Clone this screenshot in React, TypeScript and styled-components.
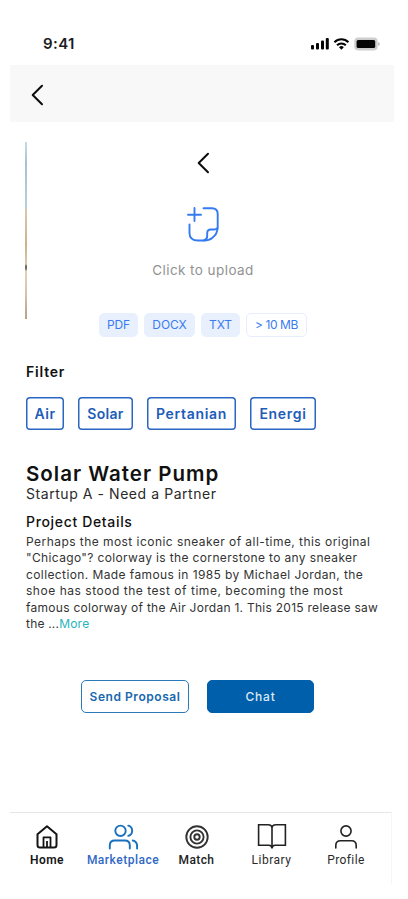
import React from "react";
import styled, { createGlobalStyle } from "styled-components";

const GlobalStyle = createGlobalStyle`
  * { box-sizing: border-box; }
  body { margin: 0; background: #fff; font-family: Inter, sans-serif; -webkit-font-smoothing: antialiased; }
  button { font: inherit; padding: 0; margin: 0; cursor: pointer; }
`;

const Screen = styled.main`
  width: 408px;
  height: 899px;
  padding-left: 10px;
  background: #fff;
  overflow: hidden;
  display: flex;
  flex-direction: column;
`;

const StatusBar = styled.div`
  height: 65px;
  flex: none;
  width: 384px;
  padding: 22px 14px 0 33px;
  display: flex;
  justify-content: space-between;
  align-items: center;
`;

const Clock = styled.span`
  font-size: 15px;
  font-weight: 600;
  letter-spacing: 0.4px;
  color: #1c1c1c;
  margin-bottom: 1px;
`;

const Header = styled.header`
  width: 384px;
  height: 57px;
  flex: none;
  background: #f8f8f8;
  padding: 3px 0 0 21px;
  display: flex;
  align-items: center;
`;

const IconButton = styled.button`
  border: 0;
  background: none;
  display: flex;
  color: #0c0c0c;
`;

const Upload = styled.section`
  height: 228px;
  flex: none;
  display: flex;
  padding: 20px 0 0 15px;
`;

const PhotoEdge = styled.div`
  width: 1.5px;
  margin-right: 0.5px;
  height: 177px;
  background: linear-gradient(
    #c3dce6 0%, #a4c3d2 12%, #b4cfdd 36%, #dfc6a9 39%, #cdb08b 58%, #dfc6a9 69%,
    #6f6c68 70%, #6f6c68 71.5%, #e3d0ba 73%, #dbc2a8 85%, #b79f88 100%
  );
`;

const DropZone = styled.div`
  width: 352px;
  display: flex;
  flex-direction: column;
  align-items: center;
  padding-top: 10px;
`;

const UploadIcon = styled.div`
  margin-top: 33px;
  height: 36px;
  display: flex;
`;

const Hint = styled.div`
  margin-top: 17px;
  height: 20px;
  line-height: 20px;
  font-size: 13.5px;
  letter-spacing: 0.43px;
  color: #929292;
`;

const FileTypes = styled.div`
  margin-top: 33px;
  display: flex;
  gap: 6px;
`;

const FileType = styled.span<{ $w: number; $outlined?: boolean }>`
  width: ${(p) => p.$w}px;
  height: 24px;
  border-radius: 5px;
  border: 1px solid ${(p) => (p.$outlined ? "#e6eefd" : "#e9f0fd")};
  background: ${(p) => (p.$outlined ? "#fff" : "#e9f0fd")};
  color: #397cf0;
  font-size: 12px;
  line-height: 22px;
  letter-spacing: ${(p) => (p.$outlined ? -0.4 : -0.1)}px;
  text-align: center;
  white-space: nowrap;
`;

const Text = styled.div<{ $size: number; $line: number; $weight?: number; $track?: number; $color?: string }>`
  font-size: ${(p) => p.$size}px;
  line-height: ${(p) => p.$line}px;
  height: ${(p) => p.$line}px;
  font-weight: ${(p) => p.$weight ?? 400};
  letter-spacing: ${(p) => p.$track ?? 0}px;
  color: ${(p) => p.$color ?? "#111"};
  white-space: nowrap;
`;

const Content = styled.section`
  height: 330px;
  flex: none;
  padding: 12px 0 0 16px;
`;

const Filters = styled.div`
  display: flex;
  gap: 14px;
  margin: 15px 0 32px;
`;

const Filter = styled.button<{ $w: number; $track: number }>`
  width: ${(p) => p.$w}px;
  height: 33px;
  border: 0;
  box-shadow: inset 0 0 0 1.5px #2a66c0;
  border-radius: 4px;
  background: #fff;
  color: #1e5cb8;
  font-size: 14px;
  font-weight: 600;
  letter-spacing: ${(p) => p.$track}px;
  white-space: nowrap;
`;

const Description = styled.div`
  margin-top: 3px;
`;

const ProjectHeading = styled.div`
  margin-top: 11px;
`;

const More = styled.span`
  color: #27b5bd;
`;

const Actions = styled.div`
  display: flex;
  gap: 18px;
  height: 132px;
  flex: none;
  padding-left: 71px;
`;

const Action = styled.button<{ $filled?: boolean }>`
  width: ${(p) => (p.$filled ? 107 : 108)}px;
  height: 33px;
  border-radius: 5px;
  border: 1px solid ${(p) => (p.$filled ? "#005faa" : "#2b7aba")};
  background: ${(p) => (p.$filled ? "#005faa" : "#fff")};
  color: ${(p) => (p.$filled ? "#dbe9f4" : "#1768ae")};
  font-size: 12px;
  font-weight: ${(p) => (p.$filled ? 500 : 600)};
  letter-spacing: ${(p) => (p.$filled ? 0.8 : 0.55)}px;
  white-space: nowrap;
`;

const TabBar = styled.nav`
  width: 382px;
  height: 72px;
  flex: none;
  border-top: 1px solid #e6e6e6;
  border-right: 1px solid #f5f5f5;
  display: grid;
  grid-template-columns: 74px 78px 69px 81px 68px;
`;

const Tab = styled.button<{ $color: string; $weight: number; $track: number }>`
  border: 0;
  background: none;
  color: ${(p) => p.$color};
  display: flex;
  flex-direction: column;
  align-items: center;
  font-family: Roboto, sans-serif;
  font-size: 12px;
  line-height: 14px;
  font-weight: ${(p) => p.$weight};
  letter-spacing: ${(p) => p.$track}px;
`;

const TabIcon = styled.span`
  height: 30px;
  margin: 9px 0 1px;
  display: flex;
  align-items: center;
`;

const Chevron = () => (
  <svg width="13" height="22" viewBox="0 0 13 22" fill="none" stroke="currentColor" strokeWidth="2" strokeLinecap="round" strokeLinejoin="round">
    <path d="M11 1.8 1.7 11 11 20.2" />
  </svg>
);

const StatusIcons = () => (
  <svg width="70" height="14" viewBox="0 0 70 14" fill="none">
    <g fill="#050505">
      <rect x="1" y="8" width="3" height="4.5" rx="1" />
      <rect x="6" y="6" width="3" height="6.5" rx="1" />
      <rect x="11" y="3.6" width="3" height="8.9" rx="1" />
      <rect x="15.8" y="1" width="3" height="11.5" rx="1" />
    </g>
    <g stroke="#050505" strokeWidth="2">
      <path d="M24.4 5.2a10 10 0 0 1 14 0" />
      <path d="M27 8.3a6.2 6.2 0 0 1 8.8 0" />
    </g>
    <path d="M29 10.2a3.4 3.4 0 0 1 4.8 0l-2.4 2.5z" fill="#050505" />
    <rect x="45" y="1.2" width="22" height="11.6" rx="3.2" fill="#ccc" stroke="#ccc" strokeWidth="1.3" />
    <rect x="46.6" y="3" width="18.6" height="8" rx="1.5" fill="#050505" />
    <path d="M68.2 5v4q1.6-.6 1.6-2t-1.6-2z" fill="#b8b8b8" />
  </svg>
);

const AddNoteIcon = () => (
  <svg width="34" height="36" viewBox="0 0 34 36" fill="none" stroke="#347bf1" strokeWidth="1.9" strokeLinecap="round" strokeLinejoin="round">
    <path d="M8.5 1v13M2 7.7h13" />
    <path d="M17.5 1.3H26q5.7 0 5.7 5.7v12.5q0 7.5-5.5 11.5-3 2.5-8.2 2.5h-6Q3.5 33.5 3.5 26v-8.500" />
    <path d="M31.500 21.200q-1 1.300-3.500 1.300h-3.200q-3.600 0-3.600 3.600v3.200q0 3-3.200 4.200" />
  </svg>
);

const HomeIcon = () => (
  <svg width="22" height="24" viewBox="0 0 22 24" fill="none" stroke="currentColor" strokeWidth="2" strokeLinejoin="round">
    <path d="M1.5 9.3 11 1.300 20.500 9.300V20q0 2.500-2.500 2.500H4Q1.500 22.500 1.500 20z" />
    <path d="M7.500 22v-9.700h7V22M11 16v6" strokeWidth="1.800" />
  </svg>
);

const UsersIcon = () => (
  <svg width="30" height="26" viewBox="-0.5 0 30 26" fill="none" stroke="#1971bd" strokeWidth="1.9" strokeLinecap="round">
    <circle cx="12" cy="6.8" r="5.2" />
    <path d="M1.300 24.500v-3q0-5 5-5h10q5 0 5 5v3M19.800 1.700a5.300 5.300 0 0 1 0 10.200M24.300 16.500q4.300 1 4.300 5.500v2.500" />
  </svg>
);

const TargetIcon = () => (
  <svg width="24" height="24" viewBox="0 0 24 24" fill="none" stroke="#333" strokeWidth="1.9">
    <circle cx="12" cy="12" r="10.7" />
    <circle cx="12" cy="12" r="6.6" />
    <circle cx="12" cy="12" r="2.7" />
  </svg>
);

const BookIcon = () => (
  <svg width="30" height="28" viewBox="0 0 30 28" fill="none" stroke="#222" strokeWidth="1.6">
    <path d="M1.600 1.800H11q4 0 4 3.500 0-3.500 4-3.500h9.400v20.400H18q-3 0-3 3.300 0-3.300-3-3.300H1.600zM15 5v20.500" />
  </svg>
);

const PersonIcon = () => (
  <svg width="24" height="26" viewBox="0 0 24 26" fill="none" stroke="#222" strokeWidth="1.6" strokeLinecap="round">
    <circle cx="12" cy="7" r="5.100" />
    <path d="M1.800 24v-2.500q0-4.700 4.700-4.700h11q4.700 0 4.700 4.700V24" />
  </svg>
);

const filters = [
  { label: "Air", width: 38, track: 0.5 },
  { label: "Solar", width: 55, track: 0.3 },
  { label: "Pertanian", width: 89, track: 0.7 },
  { label: "Energi", width: 66, track: 0.7 },
];

const lines = [
  { text: "Perhaps the most iconic sneaker of all-time, this original", track: 0.45 },
  { text: "\"Chicago\"? colorway is the cornerstone to any sneaker", track: 0.36 },
  { text: "collection. Made famous in 1985 by Michael Jordan, the", track: 0.4 },
  { text: "shoe has stood the test of time, becoming the most", track: 0.53 },
  { text: "famous colorway of the Air Jordan 1. This 2015 release saw", track: 0.27 },
];

const tabs = [
  { label: "Home", icon: <HomeIcon />, color: "#151515", weight: 600, track: 0.5 },
  { label: "Marketplace", icon: <UsersIcon />, color: "#2f68c5", weight: 500, track: 0.5 },
  { label: "Match", icon: <TargetIcon />, color: "#222", weight: 500, track: 0.4 },
  { label: "Library", icon: <BookIcon />, color: "#2a2a2a", weight: 400, track: 0.5 },
  { label: "Profile", icon: <PersonIcon />, color: "#2a2a2a", weight: 400, track: 0.4 },
];

export default function App() {
  return (
    <>
      <GlobalStyle />
      <Screen>
        <StatusBar>
          <Clock>9:41</Clock>
          <StatusIcons />
        </StatusBar>
        <Header>
          <IconButton aria-label="Back"><Chevron /></IconButton>
        </Header>
        <Upload>
          <PhotoEdge />
          <DropZone>
            <IconButton aria-label="Previous"><Chevron /></IconButton>
            <UploadIcon><AddNoteIcon /></UploadIcon>
            <Hint>Click to upload</Hint>
            <FileTypes>
              <FileType $w={39}>PDF</FileType>
              <FileType $w={51}>DOCX</FileType>
              <FileType $w={39}>TXT</FileType>
              <FileType $w={61} $outlined>&gt; 10 MB</FileType>
            </FileTypes>
          </DropZone>
        </Upload>
        <Content>
          <Text $size={14} $line={20} $weight={600} $track={0.8}>Filter</Text>
          <Filters>
            {filters.map((f) => (
              <Filter key={f.label} $w={f.width} $track={f.track}>{f.label}</Filter>
            ))}
          </Filters>
          <Text $size={20.5} $line={24} $weight={600} $track={1}>Solar Water Pump</Text>
          <Text $size={14} $line={16} $track={0.56} $color="#2a2a2a">Startup A - Need a Partner</Text>
          <ProjectHeading>
            <Text $size={14} $line={18} $weight={500} $track={0.66}>Project Details</Text>
          </ProjectHeading>
          <Description>
            {lines.map((l) => (
              <Text key={l.text} $size={12} $line={16.4} $track={l.track} $color="#333">{l.text}</Text>
            ))}
            <Text $size={12} $line={16.4} $track={0.2} $color="#333">the ...<More>More</More></Text>
          </Description>
        </Content>
        <Actions>
          <Action>Send Proposal</Action>
          <Action $filled>Chat</Action>
        </Actions>
        <TabBar>
          {tabs.map((t) => (
            <Tab key={t.label} $color={t.color} $weight={t.weight} $track={t.track}>
              <TabIcon>{t.icon}</TabIcon>
              {t.label}
            </Tab>
          ))}
        </TabBar>
      </Screen>
    </>
  );
}
